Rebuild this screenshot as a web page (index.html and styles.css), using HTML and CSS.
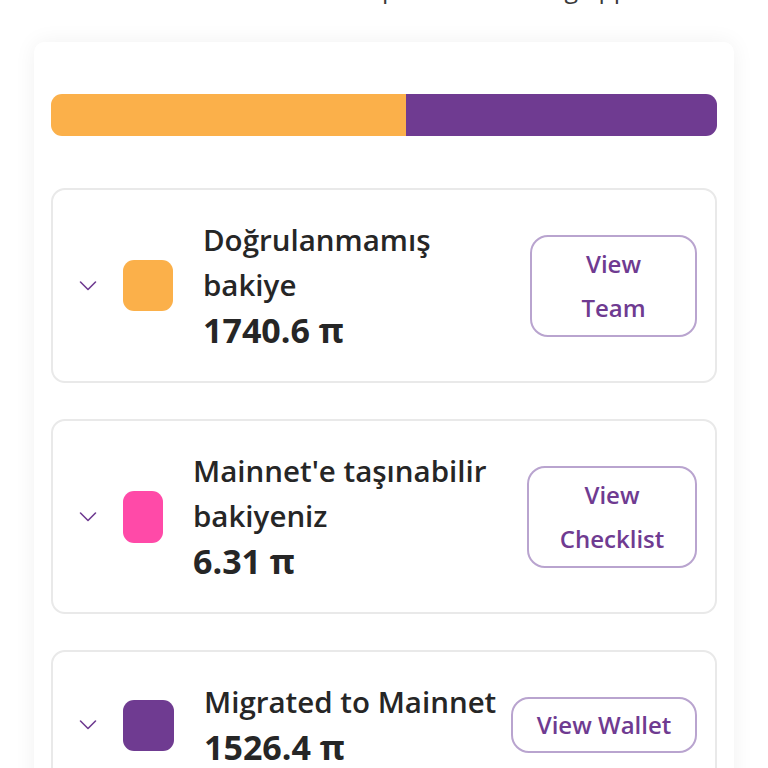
FILE: index.html
```html
<!DOCTYPE html>
<html>
<head>
<meta charset="utf-8">
<link rel="stylesheet" href="styles.css">
</head>
<body>
<div class="page">
  <p class="intro">The total balance is split in the mining app</p>
  <div class="panel">
    <div class="bar">
      <div class="seg seg-orange" style="width:53.3%"></div>
      <div class="seg seg-purple" style="width:46.7%"></div>
    </div>

    <div class="item">
      <svg class="chev" viewBox="0 0 18 12" width="18" height="12"><path d="M1.5 2 L9 9.5 L16.5 2" fill="none" stroke="#6f3b91" stroke-width="1.6" stroke-linecap="round" stroke-linejoin="round"/></svg>
      <div class="swatch sw-orange"></div>
      <div class="info">
        <div class="label">Doğrulanmamış<br>bakiye</div>
        <div class="amount">1740.6 π</div>
      </div>
      <div class="btn btn-1">View<br>Team</div>
    </div>

    <div class="item">
      <svg class="chev" viewBox="0 0 18 12" width="18" height="12"><path d="M1.5 2 L9 9.5 L16.5 2" fill="none" stroke="#6f3b91" stroke-width="1.6" stroke-linecap="round" stroke-linejoin="round"/></svg>
      <div class="swatch sw-pink"></div>
      <div class="info">
        <div class="label">Mainnet'e taşınabilir<br>bakiyeniz</div>
        <div class="amount">6.31 π</div>
      </div>
      <div class="btn btn-2">View<br>Checklist</div>
    </div>

    <div class="item">
      <svg class="chev" viewBox="0 0 18 12" width="18" height="12"><path d="M1.5 2 L9 9.5 L16.5 2" fill="none" stroke="#6f3b91" stroke-width="1.6" stroke-linecap="round" stroke-linejoin="round"/></svg>
      <div class="swatch sw-purple"></div>
      <div class="info">
        <div class="label">Migrated to Mainnet</div>
        <div class="amount">1526.4 π</div>
      </div>
      <div class="btn btn-3">View Wallet</div>
    </div>
  </div>
</div>
</body>
</html>
```
FILE: styles.css
```css
html, body {
  margin: 0;
  padding: 0;
  background: #ffffff;
}
body {
  font-family: "Open Sans", "Noto Sans", sans-serif;
  color: #222222;
  overflow: hidden;
  height: 768px;
}
.page {
  padding: 0 34px;
}
.intro {
  margin: -32px 0 0 0;
  height: 40px;
  font-size: 25px;
  font-weight: 400;
  line-height: 40px;
  color: #3a3a3a;
  text-align: center;
  white-space: nowrap;
  overflow: hidden;
}
.panel {
  margin-top: 34px;
  background: #ffffff;
  border-radius: 10px;
  box-shadow: 0 0 22px rgba(0, 0, 0, 0.06);
  padding: 52px 17px 40px 17px;
}
.bar {
  display: flex;
  height: 42px;
  border-radius: 11px;
  overflow: hidden;
  margin-bottom: 52px;
}
.seg { height: 100%; }
.seg-orange { background: #fbb04a; }
.seg-purple { background: #6f3b91; }

.item {
  display: flex;
  align-items: center;
  border: 2px solid #e9e9e9;
  border-radius: 14px;
  margin-bottom: 36px;
  padding: 27px 18px 27px 26px;
}
.chev {
  flex: none;
  margin-right: 26px;
}
.swatch {
  flex: none;
  width: 50px;
  height: 51px;
  border-radius: 11px;
}
.sw-orange { background: #fbb04a; }
.sw-pink { background: #ff4aa8; width: 40px; height: 52px; }
.sw-purple { background: #6f3b91; width: 51px; }

.info {
  margin-left: 30px;
  flex: 1;
  min-width: 0;
}
.label {
  font-size: 29.5px;
  font-weight: 600;
  line-height: 45px;
  color: #262626;
  white-space: nowrap;
}
.amount {
  font-size: 34px;
  font-weight: 700;
  line-height: 47px;
  color: #262626;
}
.btn {
  flex: none;
  box-sizing: border-box;
  border: 2px solid #b9a4cf;
  border-radius: 18px;
  color: #6f3b91;
  font-size: 24px;
  font-weight: 600;
  line-height: 44px;
  text-align: center;
  padding: 5px 0;
}
.btn-1 { width: 167px; }
.btn-2 { width: 170px; }
.btn-3 { width: 186px; line-height: 50px; padding: 1px 0; }
```
